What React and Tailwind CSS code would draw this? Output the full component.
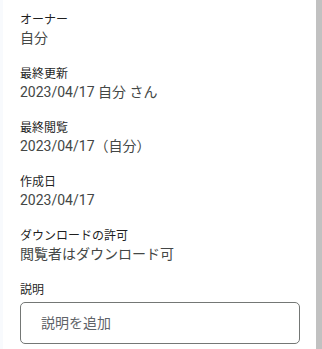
import React from 'react';

const details = [
  { label: 'オーナー', value: '自分' },
  { label: '最終更新', value: '2023/04/17 自分 さん' },
  { label: '最終閲覧', value: '2023/04/17（自分）' },
  { label: '作成日', value: '2023/04/17' },
  { label: 'ダウンロードの許可', value: '閲覧者はダウンロード可' },
];

const DetailRow = ({ label, value }) => (
  <div className="mb-[18px]">
    <div className="text-[12px] leading-[16px] text-[#1f1f1f]">{label}</div>
    <div className="text-[14px] leading-[20px] text-[#444746]">{value}</div>
  </div>
);

export default function App() {
  return (
    <div
      className="flex h-[349px] w-[322px] overflow-hidden bg-white"
      style={{ fontFamily: 'Roboto, "Noto Sans CJK JP", sans-serif' }}
    >
      <div className="w-[3px] bg-[#f8fafd]" />
      <div className="flex-1 pl-[17px] pr-[16px] pt-[12px]">
        {details.map((d) => (
          <DetailRow key={d.label} label={d.label} value={d.value} />
        ))}
        <div className="text-[12px] leading-[16px] text-[#1f1f1f]">説明</div>
        <div className="mt-[4px] flex h-[42px] items-center rounded-[5px] border border-[#747775] px-[20px] text-[14px] text-[#5f6368]">
          説明を追加
        </div>
      </div>
      <div className="w-[6px] bg-[#c1c1c1]" />
    </div>
  );
}
